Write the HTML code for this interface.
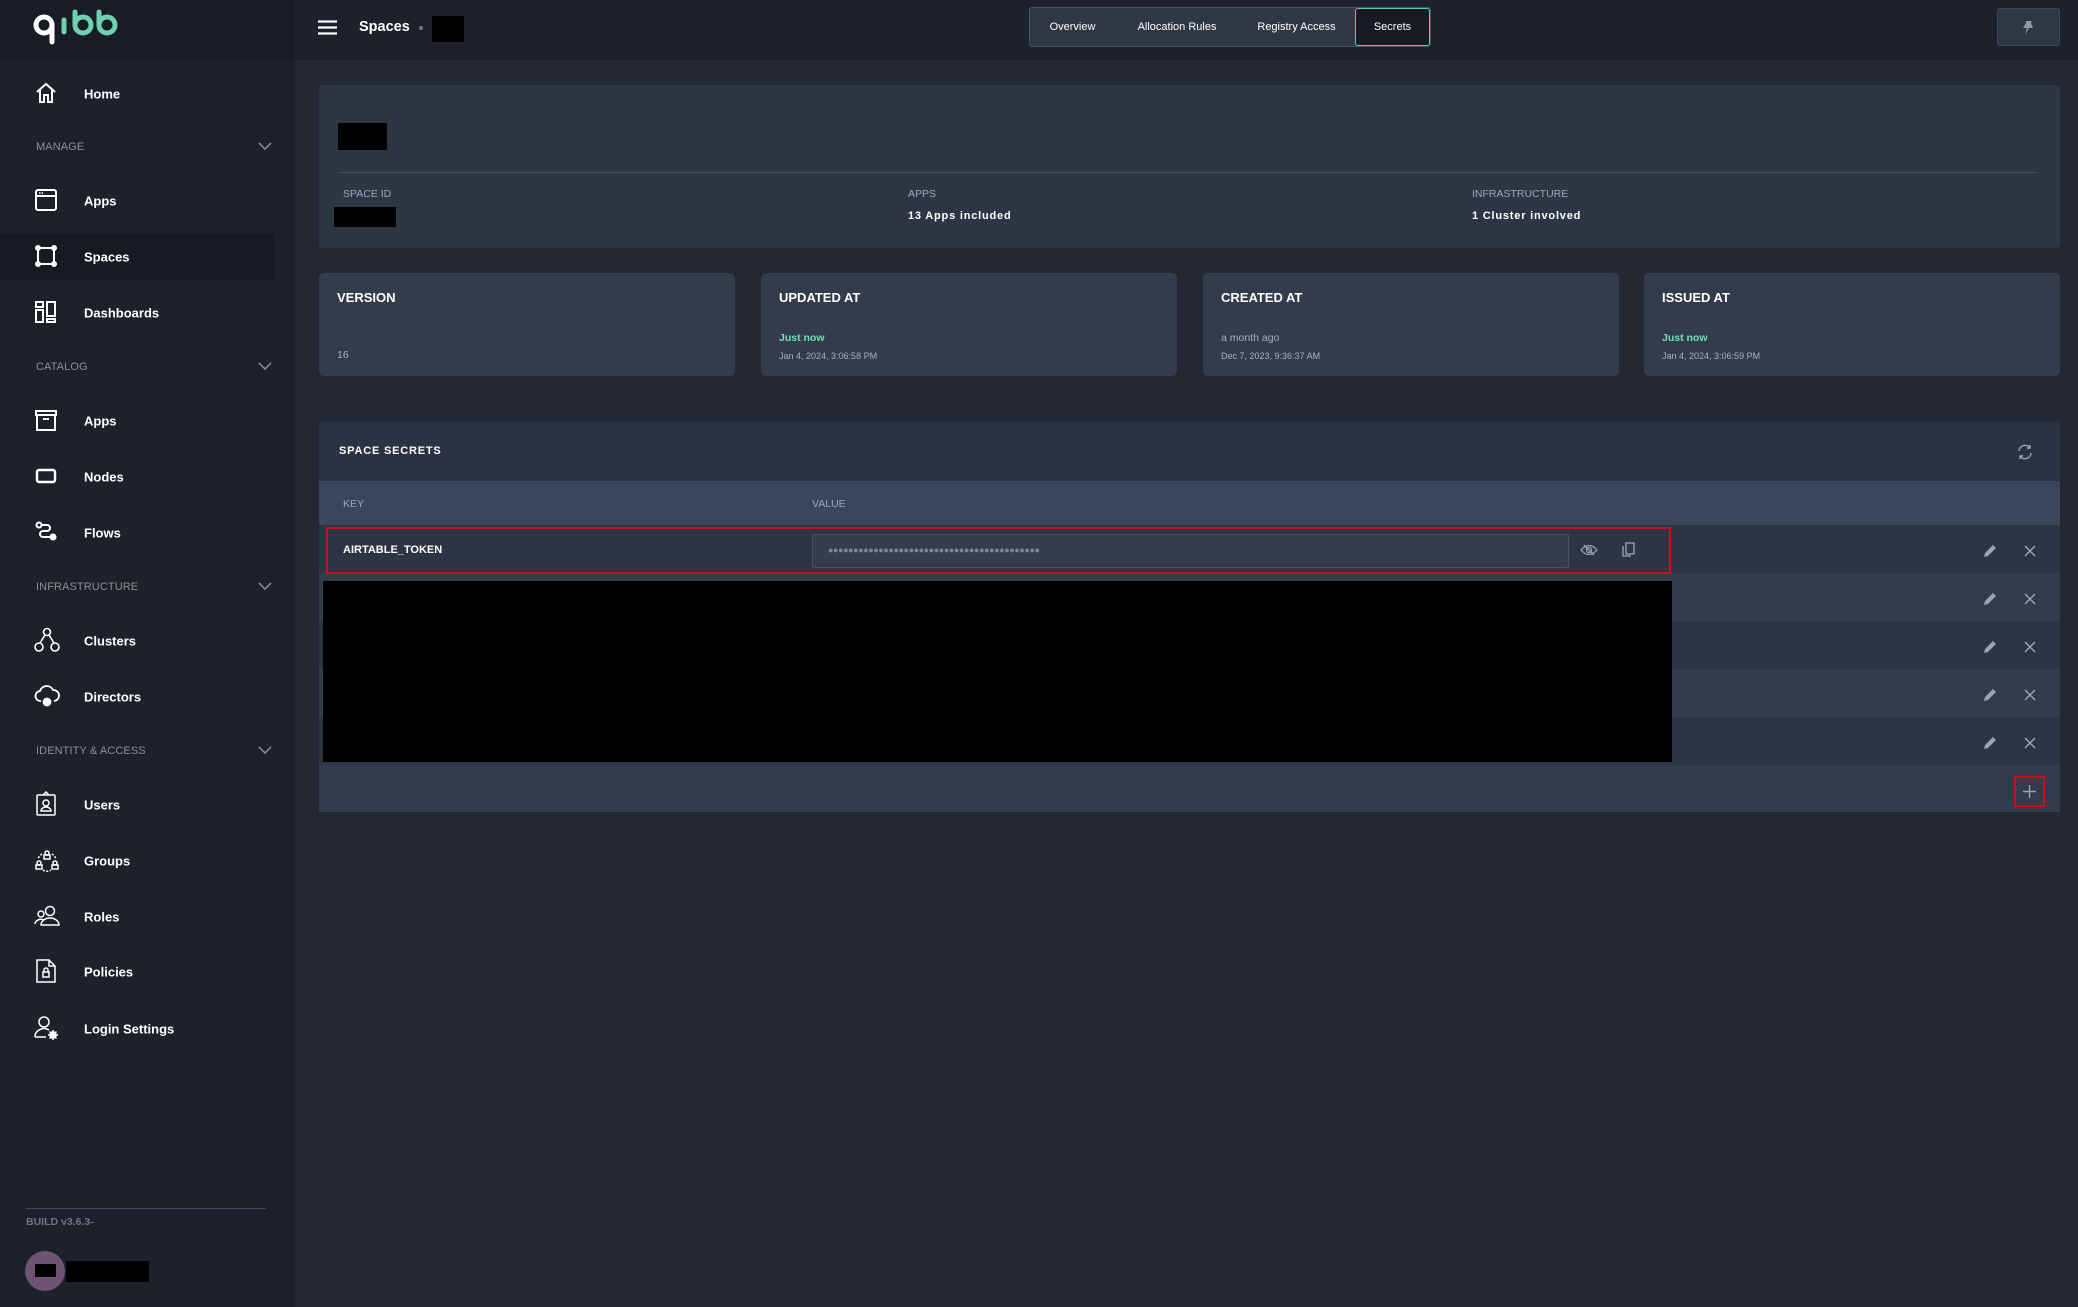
<!DOCTYPE html>
<html><head><meta charset="utf-8"><style>
*{margin:0;padding:0;box-sizing:border-box}
body{width:2078px;height:1307px;background:#232833;font-family:"Liberation Sans",sans-serif;position:relative;overflow:hidden;color:#fff}
.a{position:absolute}
.side{left:0;top:0;width:295px;height:1307px;background:#1c212b}
.logo{left:0;top:0;width:295px;height:60px;background:#181c24}
.top{left:295px;top:0;width:1783px;height:60px;background:#1c212b}
.it{position:absolute;left:84px;font-size:13px;font-weight:bold;color:#fff;transform:translateY(-45%)}
.ic{position:absolute;left:34px;transform:translateY(-50%)}
.sec{position:absolute;left:36px;font-size:11px;color:#8a8f99;transform:translateY(-40%);letter-spacing:.1px}
.chev{position:absolute;left:258px;transform:translateY(-50%)}
.card{background:#2e3644;border-radius:4px}
.lbl{font-size:10.5px;color:#9aa6bb}
.val{font-size:11px;font-weight:bold;color:#fff;letter-spacing:.8px}
.st{background:#343c4c;border-radius:5px;top:273px;height:103px;width:416px}
.st .t{position:absolute;left:18px;top:17px;font-size:13px;font-weight:bold}
.st .g{position:absolute;left:18px;top:59px;font-size:10.5px;color:#6fe0b8;font-weight:bold}
.st .m{position:absolute;left:18px;top:59px;font-size:10.5px;color:#a8b0bf}
.st .d{position:absolute;left:18px;top:78px;font-size:9px;color:#a8b0bf}
.row{position:absolute;left:319px;width:1741px;height:48px}
.tab{position:absolute;top:9px;height:37px;line-height:37px;font-size:11px;color:#fff;text-align:center}
</style></head><body>
<div class="a side"></div>
<div class="a logo">
<svg class="a" style="left:32px;top:8px" width="96" height="42" viewBox="0 0 96 42">
<circle cx="12" cy="17" r="8" fill="none" stroke="#fff" stroke-width="5"/>
<path d="M20 17 V34" stroke="#fff" stroke-width="5" stroke-linecap="round"/>
<path d="M32 12 V24" stroke="#6fcfae" stroke-width="5" stroke-linecap="round"/>
<path d="M43 4 V17" stroke="#6fcfae" stroke-width="5" stroke-linecap="round"/>
<circle cx="51" cy="17" r="8" fill="none" stroke="#6fcfae" stroke-width="5"/>
<path d="M67 4 V17" stroke="#6fcfae" stroke-width="5" stroke-linecap="round"/>
<circle cx="75" cy="17" r="8" fill="none" stroke="#6fcfae" stroke-width="5"/>
</svg>
</div>
<div class="a top"></div>

<!-- sidebar -->
<div class="a" style="left:0;top:233px;width:275px;height:47px;background:#161a21;border-radius:0 4px 4px 0"></div>
<svg class="ic" style="top:93px" width="24" height="24" viewBox="0 0 24 24" fill="none" stroke="#fff" stroke-width="2"><path d="M3 11 L12 3 L21 11 M6 9 V21 H10 V14 H14 V21 H18 V9"/></svg>
<div class="it" style="top:93px">Home</div>
<div class="sec" style="top:146px">MANAGE</div>
<svg class="chev" style="top:146px" width="14" height="8"><path d="M1 1 L7 7 L13 1" stroke="#8a8f99" stroke-width="1.5" fill="none"/></svg>
<svg class="ic" style="top:200px" width="24" height="24" viewBox="0 0 24 24" fill="none" stroke="#fff" stroke-width="2"><rect x="2" y="2" width="20" height="20" rx="2"/><path d="M2 8 H22"/><path d="M5 5 H10" stroke-width="1.5" stroke-dasharray="1.5 1"/></svg>
<div class="it" style="top:200px">Apps</div>
<svg class="ic" style="top:256px" width="24" height="24" viewBox="0 0 24 24" fill="none" stroke="#fff" stroke-width="2"><rect x="4" y="4" width="16" height="16"/><circle cx="4" cy="4" r="2" fill="#fff"/><circle cx="20" cy="4" r="2" fill="#fff"/><circle cx="4" cy="20" r="2" fill="#fff"/><circle cx="20" cy="20" r="2" fill="#fff"/></svg>
<div class="it" style="top:256px">Spaces</div>
<svg class="ic" style="top:312px" width="24" height="24" viewBox="0 0 24 24" fill="none" stroke="#fff" stroke-width="2"><rect x="2" y="2" width="7" height="5"/><rect x="2" y="10" width="7" height="12"/><rect x="13" y="2" width="8" height="14"/><rect x="13" y="19" width="8" height="3"/></svg>
<div class="it" style="top:312px">Dashboards</div>
<div class="sec" style="top:366px">CATALOG</div>
<svg class="chev" style="top:366px" width="14" height="8"><path d="M1 1 L7 7 L13 1" stroke="#8a8f99" stroke-width="1.5" fill="none"/></svg>
<svg class="ic" style="top:420px" width="24" height="24" viewBox="0 0 24 24" fill="none" stroke="#fff" stroke-width="2"><rect x="2" y="3" width="20" height="4"/><rect x="3" y="7" width="18" height="15"/><path d="M9 11 H15"/></svg>
<div class="it" style="top:420px">Apps</div>
<svg class="ic" style="top:476px" width="24" height="24" viewBox="0 0 24 24" fill="none" stroke="#fff" stroke-width="2.4"><rect x="3" y="6" width="18" height="12" rx="2"/></svg>
<div class="it" style="top:476px">Nodes</div>
<svg class="ic" style="top:532px" width="24" height="24" viewBox="0 0 24 24" fill="none" stroke="#fff" stroke-width="2"><circle cx="5" cy="5" r="2.5"/><path d="M7 5 H13 A3 3 0 0 1 13 11 H9 A3 3 0 0 0 9 17 H17"/><circle cx="19" cy="17" r="2.5" fill="#fff"/></svg>
<div class="it" style="top:532px">Flows</div>
<div class="sec" style="top:586px">INFRASTRUCTURE</div>
<svg class="chev" style="top:586px" width="14" height="8"><path d="M1 1 L7 7 L13 1" stroke="#8a8f99" stroke-width="1.5" fill="none"/></svg>
<svg class="ic" style="top:640px" width="26" height="26" viewBox="0 0 26 26" fill="none" stroke="#fff" stroke-width="1.6"><circle cx="13" cy="5" r="3.5"/><circle cx="5" cy="20" r="4"/><circle cx="21" cy="20" r="4"/><path d="M11 8 L6 16 M15 8 L20 16"/></svg>
<div class="it" style="top:640px">Clusters</div>
<svg class="ic" style="top:696px" width="26" height="26" viewBox="0 0 26 26" fill="none" stroke="#fff" stroke-width="1.8"><path d="M7 18 A5 5 0 0 1 6 8 A7 7 0 0 1 19 7 A5 5 0 0 1 20 18"/><circle cx="13" cy="19" r="3.5" fill="#fff"/></svg>
<div class="it" style="top:696px">Directors</div>
<div class="sec" style="top:750px">IDENTITY &amp; ACCESS</div>
<svg class="chev" style="top:750px" width="14" height="8"><path d="M1 1 L7 7 L13 1" stroke="#8a8f99" stroke-width="1.5" fill="none"/></svg>
<svg class="ic" style="top:804px" width="24" height="26" viewBox="0 0 24 26" fill="none" stroke="#fff" stroke-width="1.5"><rect x="3" y="4" width="18" height="20" rx="1"/><path d="M9 4 L12 1 L15 4"/><circle cx="12" cy="12" r="3"/><path d="M7 20 A5 4 0 0 1 17 20 Z"/></svg>
<div class="it" style="top:804px">Users</div>
<svg class="ic" style="top:860px" width="26" height="26" viewBox="0 0 26 26" fill="none" stroke="#fff" stroke-width="1.5"><circle cx="13" cy="6" r="2"/><rect x="10" y="8" width="6" height="4"/><circle cx="5" cy="16" r="2"/><rect x="2" y="18" width="6" height="4"/><circle cx="21" cy="16" r="2"/><rect x="18" y="18" width="6" height="4"/><path d="M8 7 A9 9 0 0 0 4 12 M18 7 A9 9 0 0 1 22 12 M9 23 A7 7 0 0 0 17 23" stroke-dasharray="2 1.5"/></svg>
<div class="it" style="top:860px">Groups</div>
<svg class="ic" style="top:916px" width="26" height="24" viewBox="0 0 26 24" fill="none" stroke="#fff" stroke-width="1.5"><circle cx="7" cy="10" r="3"/><path d="M1 20 A6 5 0 0 1 10 16"/><circle cx="16" cy="7" r="4.5"/><path d="M7 21 A9 7 0 0 1 25 21 Z"/></svg>
<div class="it" style="top:916px">Roles</div>
<svg class="ic" style="top:971px" width="24" height="26" viewBox="0 0 24 26" fill="none" stroke="#fff" stroke-width="1.5"><path d="M3 2 H15 L21 8 V24 H3 Z M15 2 V8 H21"/><rect x="9" y="14" width="6" height="5"/><path d="M10 14 V12 A2 2 0 0 1 14 12 V14"/></svg>
<div class="it" style="top:971px">Policies</div>
<svg class="ic" style="top:1028px" width="26" height="26" viewBox="0 0 26 26" fill="none" stroke="#fff" stroke-width="1.5"><circle cx="10" cy="7" r="5"/><path d="M1 22 A9 8 0 0 1 15 15 M1 22 H12"/><circle cx="19" cy="20" r="3" fill="#fff"/><path d="M19 15 V25 M14 20 H24 M15.5 16.5 L22.5 23.5 M22.5 16.5 L15.5 23.5" stroke-width="1.5"/></svg>
<div class="it" style="top:1028px">Login Settings</div>
<div class="a" style="left:26px;top:1208px;width:240px;height:1px;background:#3e4659"></div>
<div class="a" style="left:26px;top:1216px;font-size:10.5px;color:#6e7481;font-weight:bold">BUILD v3.6.3-</div>
<div class="a" style="left:25px;top:1251px;width:40px;height:40px;border-radius:50%;background:#6e5373"></div>
<div class="a" style="left:35px;top:1264px;width:21px;height:13px;background:#000"></div>
<div class="a" style="left:66px;top:1261px;width:83px;height:21px;background:#000"></div>

<!-- topbar -->
<svg class="a" style="left:318px;top:20px" width="19" height="15"><path d="M0 1.5 H19 M0 7.5 H19 M0 13.5 H19" stroke="#fff" stroke-width="2.2"/></svg>
<div class="a" style="left:359px;top:19px;font-size:14.5px;font-weight:bold">Spaces</div>
<div class="a" style="left:419px;top:26px;width:4px;height:4px;border-radius:50%;background:#777"></div>
<div class="a" style="left:432px;top:16px;width:32px;height:26px;background:#000"></div>
<div class="a" style="left:1029px;top:7px;width:402px;height:40px;background:#2f3745;border:1.5px solid #4a5366;border-radius:3px"></div>
<div class="tab" style="left:1035px;width:75px">Overview</div>
<div class="tab" style="left:1125px;width:104px">Allocation Rules</div>
<div class="tab" style="left:1245px;width:103px">Registry Access</div>
<div class="a" style="left:1355px;top:8px;width:75px;height:38px;background:#161a21;border:1.5px solid #4fd1b0;border-radius:3px"></div>
<div class="tab" style="left:1355px;width:75px">Secrets</div>
<div class="a" style="left:1997px;top:8px;width:63px;height:38px;background:#2f3745;border:1px solid #3e4659;border-radius:3px"></div>
<svg class="a" style="left:2021px;top:20px" width="14" height="16" viewBox="0 0 14 16"><path d="M5 1 H11 L10 3 L12 8 H8 L4 15 L6 8 H2 L5 3 Z" fill="#8d97a8"/></svg>

<!-- info card -->
<div class="a card" style="left:319px;top:85px;width:1741px;height:163px"></div>
<div class="a" style="left:338px;top:123px;width:49px;height:27px;background:#000"></div>
<div class="a" style="left:339px;top:172px;width:1698px;height:1px;background:#4a5468"></div>
<div class="a lbl" style="left:343px;top:188px">SPACE ID</div>
<div class="a" style="left:334px;top:207px;width:62px;height:20px;background:#000"></div>
<div class="a lbl" style="left:908px;top:188px">APPS</div>
<div class="a val" style="left:908px;top:210px">13 Apps included</div>
<div class="a lbl" style="left:1472px;top:188px">INFRASTRUCTURE</div>
<div class="a val" style="left:1472px;top:210px">1 Cluster involved</div>

<!-- stat cards -->
<div class="a st" style="left:319px"><div class="t">VERSION</div><div class="m" style="top:76px">16</div></div>
<div class="a st" style="left:761px"><div class="t">UPDATED AT</div><div class="g">Just now</div><div class="d">Jan 4, 2024, 3:06:58 PM</div></div>
<div class="a st" style="left:1203px"><div class="t">CREATED AT</div><div class="m">a month ago</div><div class="d">Dec 7, 2023, 9:36:37 AM</div></div>
<div class="a st" style="left:1644px"><div class="t">ISSUED AT</div><div class="g">Just now</div><div class="d">Jan 4, 2024, 3:06:59 PM</div></div>

<!-- secrets -->
<div class="a" style="left:319px;top:421px;width:1741px;height:60px;background:#2b3241"></div>
<div class="a" style="left:339px;top:445px;font-size:11px;font-weight:bold;letter-spacing:.8px">SPACE SECRETS</div>
<svg class="a" style="left:2017px;top:444px" width="16" height="16" viewBox="0 0 16 16" fill="none" stroke="#9aa4b5" stroke-width="1.4"><path d="M2 7 A6 6 0 0 1 13 4 M14 9 A6 6 0 0 1 3 12"/><path d="M13 1 V4 H10 M3 15 V12 H6"/></svg>
<div class="a" style="left:319px;top:481px;width:1741px;height:44px;background:#3b465b"></div>
<div class="a lbl" style="left:343px;top:498px">KEY</div>
<div class="a lbl" style="left:812px;top:498px">VALUE</div>
<div class="row" style="top:525px;background:#2d3443"></div>
<div class="row" style="top:573px;background:#343c4b"></div>
<div class="row" style="top:621px;background:#2d3443"></div>
<div class="row" style="top:669px;background:#343c4b"></div>
<div class="row" style="top:717px;background:#2d3443"></div>
<div class="row" style="top:765px;height:47px;background:#343c4b"></div>
<div class="a" style="left:326px;top:527px;width:1345px;height:47px;border:2px solid #c8101a"></div>
<div class="a" style="left:343px;top:544px;font-size:11px;font-weight:bold">AIRTABLE_TOKEN</div>
<div class="a" style="left:812px;top:534px;width:757px;height:34px;background:#353d4c;border:1px solid #4a5366;border-radius:2px"></div>
<div class="a" style="left:828px;top:545px;font-size:9px;color:#7c8596;letter-spacing:-0.4px">●●●●●●●●●●●●●●●●●●●●●●●●●●●●●●●●●●●●●●●●●●</div>
<svg class="a" style="left:1580px;top:544px" width="18" height="12" viewBox="0 0 18 12" fill="none" stroke="#9aa4b5" stroke-width="1.3"><path d="M1 6 Q9 -3 17 6 Q9 15 1 6 Z"/><circle cx="9" cy="6" r="2.5"/><path d="M4 1 L14 11"/></svg>
<svg class="a" style="left:1622px;top:542px" width="13" height="15" viewBox="0 0 13 15" fill="none" stroke="#9aa4b5" stroke-width="1.3"><rect x="4" y="1" width="8" height="11"/><path d="M1 4 V14 H9"/></svg>
<div class="a" style="left:323px;top:581px;width:1349px;height:181px;background:#000"></div>
<!-- actions -->
<svg class="a" style="left:1983px;top:544px" width="14" height="14" viewBox="0 0 14 14"><path d="M1 13 L2 9 L10 1 L13 4 L5 12 Z" fill="#9aa4b5"/></svg>
<svg class="a" style="left:2024px;top:545px" width="12" height="12"><path d="M1 1 L11 11 M11 1 L1 11" stroke="#9aa4b5" stroke-width="1.5"/></svg>
<svg class="a" style="left:1983px;top:592px" width="14" height="14" viewBox="0 0 14 14"><path d="M1 13 L2 9 L10 1 L13 4 L5 12 Z" fill="#9aa4b5"/></svg>
<svg class="a" style="left:2024px;top:593px" width="12" height="12"><path d="M1 1 L11 11 M11 1 L1 11" stroke="#9aa4b5" stroke-width="1.5"/></svg>
<svg class="a" style="left:1983px;top:640px" width="14" height="14" viewBox="0 0 14 14"><path d="M1 13 L2 9 L10 1 L13 4 L5 12 Z" fill="#9aa4b5"/></svg>
<svg class="a" style="left:2024px;top:641px" width="12" height="12"><path d="M1 1 L11 11 M11 1 L1 11" stroke="#9aa4b5" stroke-width="1.5"/></svg>
<svg class="a" style="left:1983px;top:688px" width="14" height="14" viewBox="0 0 14 14"><path d="M1 13 L2 9 L10 1 L13 4 L5 12 Z" fill="#9aa4b5"/></svg>
<svg class="a" style="left:2024px;top:689px" width="12" height="12"><path d="M1 1 L11 11 M11 1 L1 11" stroke="#9aa4b5" stroke-width="1.5"/></svg>
<svg class="a" style="left:1983px;top:736px" width="14" height="14" viewBox="0 0 14 14"><path d="M1 13 L2 9 L10 1 L13 4 L5 12 Z" fill="#9aa4b5"/></svg>
<svg class="a" style="left:2024px;top:737px" width="12" height="12"><path d="M1 1 L11 11 M11 1 L1 11" stroke="#9aa4b5" stroke-width="1.5"/></svg>
<div class="a" style="left:2014px;top:776px;width:31px;height:31px;border:2px solid #c8101a"></div>
<svg class="a" style="left:2023px;top:785px" width="13" height="13"><path d="M6.5 0 V13 M0 6.5 H13" stroke="#9aa4b5" stroke-width="1.4"/></svg>
</body></html>
